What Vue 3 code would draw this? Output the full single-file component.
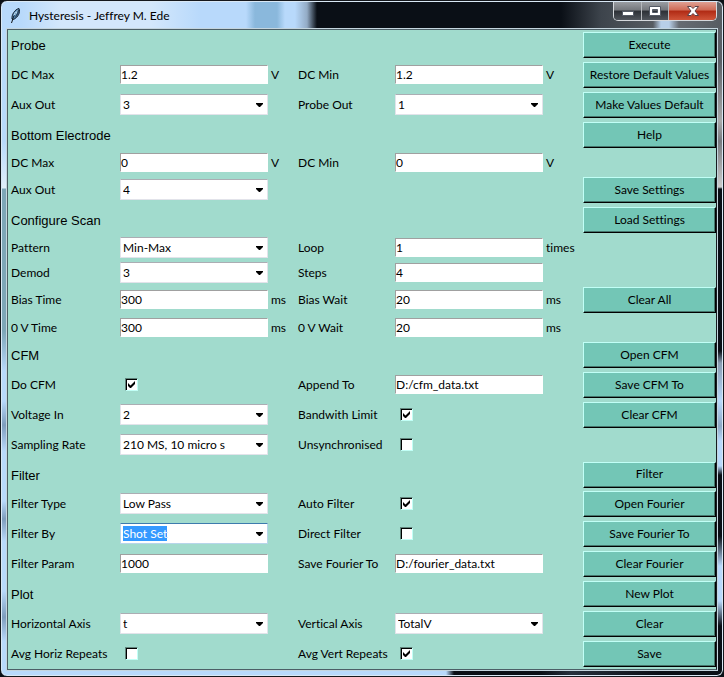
<script setup>
import { ref } from 'vue'

const rows = ref([
  { title: 'Probe', button: 'Execute' },
  { a: { label: 'DC Max', kind: 'text', value: '1.2', unit: 'V' }, b: { label: 'DC Min', kind: 'text', value: '1.2', unit: 'V' }, button: 'Restore Default Values' },
  { a: { label: 'Aux Out', kind: 'select', value: '3' }, b: { label: 'Probe Out', kind: 'select', value: '1' }, button: 'Make Values Default' },
  { title: 'Bottom Electrode', button: 'Help' },
  { size: 'short', a: { label: 'DC Max', kind: 'text', value: '0', unit: 'V' }, b: { label: 'DC Min', kind: 'text', value: '0', unit: 'V' } },
  { a: { label: 'Aux Out', kind: 'select', value: '4' }, button: 'Save Settings' },
  { title: 'Configure Scan', button: 'Load Settings' },
  { size: 'short', a: { label: 'Pattern', kind: 'select', value: 'Min-Max' }, b: { label: 'Loop', kind: 'text', value: '1', unit: 'times' } },
  { size: 'short', a: { label: 'Demod', kind: 'select', value: '3' }, b: { label: 'Steps', kind: 'text', value: '4' } },
  { a: { label: 'Bias Time', kind: 'text', value: '300', unit: 'ms' }, b: { label: 'Bias Wait', kind: 'text', value: '20', unit: 'ms' }, button: 'Clear All' },
  { size: 'short', a: { label: '0 V Time', kind: 'text', value: '300', unit: 'ms' }, b: { label: '0 V Wait', kind: 'text', value: '20', unit: 'ms' } },
  { title: 'CFM', button: 'Open CFM' },
  { a: { label: 'Do CFM', kind: 'check', value: true }, b: { label: 'Append To', kind: 'text', value: 'D:/cfm_data.txt' }, button: 'Save CFM To' },
  { a: { label: 'Voltage In', kind: 'select', value: '2' }, b: { label: 'Bandwith Limit', kind: 'check', value: true }, button: 'Clear CFM' },
  { a: { label: 'Sampling Rate', kind: 'select', value: '210 MS, 10 micro s' }, b: { label: 'Unsynchronised', kind: 'check', value: false } },
  { size: 'snug', title: 'Filter', button: 'Filter' },
  { a: { label: 'Filter Type', kind: 'select', value: 'Low Pass' }, b: { label: 'Auto Filter', kind: 'check', value: true }, button: 'Open Fourier' },
  { a: { label: 'Filter By', kind: 'select', value: 'Shot Set', active: true }, b: { label: 'Direct Filter', kind: 'check', value: false }, button: 'Save Fourier To' },
  { a: { label: 'Filter Param', kind: 'text', value: '1000' }, b: { label: 'Save Fourier To', kind: 'text', value: 'D:/fourier_data.txt' }, button: 'Clear Fourier' },
  { title: 'Plot', button: 'New Plot' },
  { a: { label: 'Horizontal Axis', kind: 'select', value: 't' }, b: { label: 'Vertical Axis', kind: 'select', value: 'TotalV' }, button: 'Clear' },
  { a: { label: 'Avg Horiz Repeats', kind: 'check', value: false }, b: { label: 'Avg Vert Repeats', kind: 'check', value: true }, button: 'Save' }
])
</script>

<template>
  <div class="window">
    <header class="titlebar">
      <svg class="feather" viewBox="0 0 16 16" width="16" height="16">
        <path d="M4 11C3.500 7 6.500 1.500 11 .5C12.500 4 10.500 9 5.500 11.500Z" fill="#5a92c4" stroke="#141d28" />
        <path d="M11 1C11.800 4 10 8 6 11Z" fill="#2a4560" />
        <path d="M10 2.500C7.500 5 5.500 8 4.500 12L3.500 15" fill="none" stroke="#0c1014" />
        <path d="M7.500 4L6 7.500M9.300 2.500L7.500 6.500" fill="none" stroke="#c3e2f7" />
      </svg>
      <h1>Hysteresis - Jeffrey M. Ede</h1>
      <div class="caption">
        <button type="button" aria-label="Minimize">
          <svg viewBox="0 0 12 10" width="12" height="10"><rect x=".5" y="5.500" width="11" height="4" fill="#fff" stroke="#555b66" /></svg>
        </button>
        <button type="button" class="maximize" aria-label="Maximize">
          <svg viewBox="0 0 12 10" width="12" height="10"><path d="M.5.5h11v9H.5zM3.500 3.500v3h5v-3z" fill="#fff" fill-rule="evenodd" stroke="#555b66" /></svg>
        </button>
        <button type="button" class="close" aria-label="Close">
          <svg viewBox="0 0 12 10" width="12" height="10"><path d="M.5.5H4l2 2 2-2h3.500L8 5l3.500 4.500H8l-2-2-2 2H.5L4 5z" fill="#fff" stroke="#5a4046" /></svg>
        </button>
      </div>
    </header>
    <form class="panel" @submit.prevent>
      <div v-for="(row, i) in rows" :key="i" class="row" :class="row.size">
        <h2 v-if="row.title">{{ row.title }}</h2>
        <template v-for="side in ['a', 'b']" :key="side">
          <div v-if="row[side]" class="field" :class="side">
            <label :for="`f${i}${side}`">{{ row[side].label }}</label>
            <input v-if="row[side].kind === 'text'" :id="`f${i}${side}`" v-model="row[side].value" class="entry" type="text" />
            <span v-else-if="row[side].kind === 'select'" class="combo" :class="{ active: row[side].active }">
              <select :id="`f${i}${side}`"><option>{{ row[side].value }}</option></select>
              <span v-if="row[side].active" class="selection" aria-hidden="true">{{ row[side].value }}</span>
              <svg class="arrow" viewBox="0 0 7 4" width="7" height="4"><path d="M0 0h7v1L4 4H3L0 1z" /></svg>
            </span>
            <span v-else class="tick">
              <input :id="`f${i}${side}`" v-model="row[side].value" type="checkbox" />
              <svg v-if="row[side].value" viewBox="0 0 7 7" width="7" height="7"><path d="M0 2v3l2 2h1l4-4V0L2.500 4.500z" /></svg>
            </span>
            <span class="unit">{{ row[side].unit }}</span>
          </div>
        </template>
        <button v-if="row.button" type="button" class="action">{{ row.button }}</button>
      </div>
    </form>
  </div>
</template>

<style>
body {
  background: #0a0f16;
}
</style>

<style scoped>
* {
  box-sizing: border-box;
}
.window {
  padding: 1px 6px 6px;
  border: 1px solid #15181d;
  border-radius: 7px;
  box-shadow: inset 0 0 0 1px #d9e8f5;
  font: 12px/17px Lato, sans-serif;
  font-variant-ligatures: none;
  color: #000;
  background:
    linear-gradient(90deg, #b8d9fb 0 20px, #d3e7fb 60px 150px, #b8d9fb 200px 245px, #8ab8dc 254px 276px, #b8d9fb 284px 294px, #93abc5 306px, #0a0f16 316px 560px, #3d444c 600px, #565b61 652px, #b8cfe8 660px 668px, #666b72 678px, #565b61 100%) top / 100% 28px no-repeat,
    linear-gradient(90deg, #b8d9fb 0 445px, #0a0f16 453px 540px, #26303c 570px, #0a0f16 660px 100%) bottom / 100% 8px no-repeat,
    linear-gradient(#b8d9fb 0 140px, #e0effa 187px, #7da6b8 188px 330px, #b8d9fb 370px 400px, #7e9dbd 424px, #b8d9fb 450px 500px, #7e9dbd 518px, #b8d9fb 540px 590px, #7e9dbd 616px, #b8d9fb 640px) left / 7px 100% no-repeat,
    linear-gradient(#5b6067 0 60px, #aaa 120px, #787b80 140px, #ccc 186px, #0a0f16 188px 350px, #8a9db3 362px, #b8d9fb 400px, #8ea9c6 425px, #b8d9fb 440px 465px, #0a0f16 474px 535px, #b8d9fb 565px 600px, #0a0f16 625px) right / 8px 100% no-repeat,
    #0a0f16;
}
.titlebar {
  display: flex;
  align-items: center;
  height: 27px;
  padding-left: 1px;
}
.feather {
  flex: none;
}
h1 {
  margin: 0 0 0 5px;
  font-size: 12px;
  font-weight: 400;
}
.caption {
  display: flex;
  align-self: flex-start;
  margin-left: auto;
  border: 1px solid #d5d8dc;
  border-top: 0;
  border-radius: 0 0 5px 5px;
  overflow: hidden;
}
.caption button {
  display: flex;
  align-items: center;
  justify-content: center;
  width: 28px;
  height: 18px;
  padding: 0;
  border: 0;
  border-right: 1px solid #b5b8bc;
  background: linear-gradient(#9a9da2, #74777c 45%, #2c3036 50%, #50555c);
}
.caption .maximize {
  width: 27px;
}
.caption .close {
  width: 47px;
  border-right: 0;
  background: linear-gradient(#dfa093, #cf6a55 45%, #b02a14 50%, #d0553a);
}
.panel {
  border: 1px solid #4c5f66;
  border-right-color: #161b20;
  background: #a1dbcd;
  box-shadow: 0 0 0 1px #c4d5de;
}
.row {
  display: grid;
  grid-template-columns: 287px minmax(0, 1fr) 133px;
  align-items: center;
  height: 30px;
}
.row.snug {
  height: 29px;
}
.row.short {
  height: 25px;
}
h2 {
  grid-area: 1 / 1;
  margin: 0;
  padding: 2px 0 0 3px;
  font: 400 13px/16px "Liberation Sans", sans-serif;
}
.field {
  grid-row: 1;
  display: grid;
  grid-template-columns: 109px 148px 1fr;
  align-items: center;
  height: 29px;
  align-self: start;
  padding-left: 3px;
}
.short .field {
  height: 25px;
}
.field.a {
  grid-column: 1;
}
.field.b {
  grid-column: 2;
  grid-template-columns: 97px 148px 1fr;
}
.unit {
  padding-left: 3px;
}
.entry {
  width: 148px;
  height: 19px;
  padding: 0;
  border: 1px solid #fff;
  border-top-color: #a0a0a0;
  border-left-color: #a0a0a0;
  background: #fff;
  font: inherit;
  color: #000;
  outline: 0;
}
.combo {
  position: relative;
  display: block;
  height: 21px;
}
select {
  appearance: none;
  display: block;
  width: 100%;
  height: 21px;
  padding: 0 18px 0 2px;
  border: 1px solid #e2e3ea;
  border-top-color: #abadb3;
  border-radius: 1px;
  background: #fff;
  font: inherit;
  color: #000;
}
.active select {
  border-color: #b7d5ea;
  border-top-color: #3d7bad;
}
.selection {
  position: absolute;
  top: 3px;
  left: 3px;
  height: 15px;
  line-height: 15px;
  color: #fff;
  background: #3399ff;
  pointer-events: none;
}
.arrow {
  position: absolute;
  top: 9px;
  right: 5px;
  pointer-events: none;
}
.tick {
  position: relative;
  display: block;
  width: 13px;
  height: 13px;
  margin-left: 5px;
}
.tick input {
  appearance: none;
  display: block;
  width: 13px;
  height: 13px;
  margin: 0;
  border: 1px solid #c1fff6;
  border-top-color: #60837b;
  border-left-color: #60837b;
  background: #fff;
  box-shadow: inset 1px 1px 0 #000;
}
.tick svg {
  position: absolute;
  top: 3px;
  left: 3px;
  pointer-events: none;
}
.action {
  grid-area: 1 / 3;
  height: 26px;
  padding: 0 0 2px;
  border: 1px solid #000;
  border-top-color: #c1fff6;
  border-left-color: #c1fff6;
  background: #73c6b6;
  box-shadow: inset -1px -1px 0 #45776d;
  font: inherit;
  color: #000;
}
</style>
